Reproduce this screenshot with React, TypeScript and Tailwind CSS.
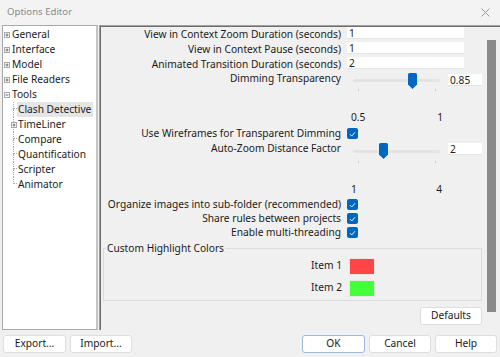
import React from "react";

function PlusBox({ minus = false }: { minus?: boolean }) {
  return (
    <svg width="6" height="6" viewBox="0 0 6 6" className="shrink-0">
      <rect x="0.5" y="0.5" width="5" height="5" fill="#fff" stroke="#a8a8a8" strokeWidth="1" />
      <line x1="1.5" y1="3" x2="4.5" y2="3" stroke="#6a6a6a" strokeWidth="1" />
      {!minus && <line x1="3" y1="1.5" x2="3" y2="4.5" stroke="#6a6a6a" strokeWidth="1" />}
    </svg>
  );
}

function Check() {
  return (
    <div className="w-[11px] h-[11px] rounded-[2px] bg-[#0067c0] flex items-center justify-center shrink-0">
      <svg width="7" height="6" viewBox="0 0 7 6">
        <path d="M1 3.2 L2.8 5 L6 1.2" fill="none" stroke="#fff" strokeWidth="0.9" />
      </svg>
    </div>
  );
}

function Thumb() {
  return (
    <svg width="9" height="16" viewBox="0 0 9 16">
      <path d="M1.5 0 H7.5 Q9 0 9 1.5 V11.5 L4.5 16 L0 11.5 V1.5 Q0 0 1.5 0 Z" fill="#0067c0" />
    </svg>
  );
}

function Btn({ children, def = false, w = "w-[62px]" }: { children: React.ReactNode; def?: boolean; w?: string }) {
  return (
    <div
      className={`${w} h-[18px] flex items-center justify-center bg-white rounded-[3px] border ${
        def ? "border-[#9fbbdc]" : "border-[#dedede]"
      } text-[10.2px] text-[#1a1a1a]`}
    >
      {children}
    </div>
  );
}

const topItems = ["General", "Interface", "Model", "File Readers"];
const children = ["Clash Detective", "TimeLiner", "Compare", "Quantification", "Scripter", "Animator"];

export default function App() {
  return (
    <div className="w-[500px] h-[357px] bg-[#f0f0f0] flex flex-col font-['Noto_Sans',sans-serif] text-[10.2px] text-[#1b1b1b] overflow-hidden whitespace-nowrap">
      {/* title bar */}
      <div className="h-[25px] flex items-center justify-between pl-[7px] pr-[10px] bg-[#f3f3f3]">
        <span className="text-[9.6px] text-[#8a8a8a]">Options Editor</span>
        <svg width="9" height="9" viewBox="0 0 9 9">
          <path d="M0.5 0.5 L8.5 8.5 M8.5 0.5 L0.5 8.5" stroke="#9a9a9a" strokeWidth="1" />
        </svg>
      </div>

      {/* main area */}
      <div className="h-[305px] flex">
        {/* tree */}
        <div className="w-[96px] ml-[2px] bg-white border-l border-t border-b border-[#a8a8a8] border-r-2 border-r-[#c4c4c4] pt-[1px]">
          {topItems.map((t) => (
            <div key={t} className="h-[15px] flex items-center">
              <div className="ml-[1px] mr-[2px]">
                <PlusBox />
              </div>
              <span className="leading-[15px]">{t}</span>
            </div>
          ))}
          <div className="h-[15px] flex items-center">
            <div className="ml-[1px] mr-[2px]">
              <PlusBox minus />
            </div>
            <span className="leading-[15px]">Tools</span>
          </div>
          {children.map((c, i) => {
            const last = i === children.length - 1;
            const sel = i === 0;
            return (
              <div key={c} className="h-[15px] flex items-stretch">
                <div className="ml-[10px] w-[4px] flex flex-col relative">
                  <div className="h-[7px] border-l border-b border-dotted border-[#a8a8a8]" />
                  <div className={`flex-1 ${last ? "" : "border-l border-dotted border-[#a8a8a8]"}`} />
                  {c === "TimeLiner" && (
                    <div className="absolute left-[-2px] top-[5px]">
                      <PlusBox />
                    </div>
                  )}
                </div>
                <span className={`leading-[15px] pl-[1px] pr-[2px] ${sel ? "bg-[#e5e5e5]" : ""}`}>{c}</span>
              </div>
            );
          })}
        </div>

        {/* right panel */}
        <div className="flex-1 ml-[1px] flex border-l border-t border-[#a0a0a0] shadow-[inset_1px_1px_0_#6e6e6e] pl-[1px] pt-[1px]">
          <div className="w-[382px] flex flex-col">
            {[
              ["View in Context Zoom Duration (seconds)", "1"],
              ["View in Context Pause (seconds)", "1"],
              ["Animated Transition Duration (seconds)", "2"],
            ].map(([l, v]) => (
              <div key={l} className="h-[15px] flex items-start">
                <div className="w-[240px] text-right leading-[15px]">{l}</div>
                <div className="ml-[6px] w-[117px] h-[12px] bg-white leading-[13px] pl-[2px] border-b border-[#e4e4e4]">{v}</div>
              </div>
            ))}

            {/* Dimming slider */}
            <div className="h-[21px] flex items-start">
              <div className="w-[240px] text-right leading-[12px]">Dimming Transparency</div>
              <div className="ml-[12px] w-[87px] h-[21px] relative">
                <div className="absolute left-0 right-0 top-[7px] h-[3px] rounded bg-[#e3e3e3]" />
                <div className="absolute left-[55px] top-[1px]">
                  <Thumb />
                </div>
                <div className="absolute left-[5px] top-[17px] w-[1px] h-[2px] bg-[#c8c8c8]" />
                <div className="absolute left-[82px] top-[17px] w-[1px] h-[2px] bg-[#c8c8c8]" />
              </div>
              <div className="ml-[8px] mt-[2px] w-[34px] h-[12px] bg-white leading-[13px] pl-[2px] border-b border-[#e4e4e4]">0.85</div>
            </div>

            <div className="h-[18px]" />
            <div className="h-[12px] flex leading-[12px]">
              <div className="ml-[250px] w-[92px] flex justify-between">
                <span>0.5</span>
                <span>1</span>
              </div>
            </div>
            <div className="h-[3px]" />

            <div className="h-[15px] flex items-start">
              <div className="w-[240px] text-right leading-[15px]">Use Wireframes for Transparent Dimming</div>
              <div className="ml-[6px] mt-[2px]">
                <Check />
              </div>
            </div>

            {/* auto zoom slider */}
            <div className="h-[23px] flex items-start">
              <div className="w-[240px] text-right leading-[14px]">Auto-Zoom Distance Factor</div>
              <div className="ml-[12px] w-[87px] h-[23px] relative">
                <div className="absolute left-0 right-0 top-[9px] h-[3px] rounded bg-[#e3e3e3]" />
                <div className="absolute left-[26px] top-[2px]">
                  <Thumb />
                </div>
                <div className="absolute left-[5px] top-[20px] w-[1px] h-[2px] bg-[#c8c8c8]" />
                <div className="absolute left-[82px] top-[20px] w-[1px] h-[2px] bg-[#c8c8c8]" />
              </div>
              <div className="ml-[8px] mt-[2px] w-[34px] h-[12px] bg-white leading-[13px] pl-[2px] border-b border-[#e4e4e4]">2</div>
            </div>

            <div className="h-[19px]" />
            <div className="h-[12px] flex leading-[12px]">
              <div className="ml-[250px] w-[91px] flex justify-between">
                <span>1</span>
                <span>4</span>
              </div>
            </div>
            <div className="h-[2px]" />

            {[
              "Organize images into sub-folder (recommended)",
              "Share rules between projects",
              "Enable multi-threading",
            ].map((l) => (
              <div key={l} className="h-[14px] flex items-start">
                <div className="w-[240px] text-right leading-[14px]">{l}</div>
                <div className="ml-[6px] mt-[2px]">
                  <Check />
                </div>
              </div>
            ))}

            <div className="h-[2px]" />
            <fieldset className="ml-[2px] mr-[1px] border border-[#dcdcdc] pl-[2px] pb-[1px]">
              <legend className="leading-[14px] px-[1px]">Custom Highlight Colors</legend>
              {[
                ["Item 1", "bg-[#ff4545]"],
                ["Item 2", "bg-[#44ff3a]"],
              ].map(([l, c]) => (
                <div key={l} className="h-[22px] flex items-center">
                  <div className="w-[236px] text-right">{l}</div>
                  <div className={`ml-[7px] w-[26px] h-[17px] ${c} border border-[#e8e8e8]`} />
                </div>
              ))}
            </fieldset>

            <div className="flex justify-end mt-[6px] mr-[1px]">
              <Btn>Defaults</Btn>
            </div>
          </div>

          {/* scrollbar */}
          <div className="flex-1 flex justify-center pt-[13px]">
            <div className="w-[9px] h-[272px] bg-[#8a8a8a]" />
          </div>
        </div>
      </div>

      {/* bottom bar */}
      <div className="flex-1 flex items-center px-[3px] gap-[4px]">
        <Btn w="w-[63px]">Export...</Btn>
        <Btn w="w-[62px]">Import...</Btn>
        <div className="flex-1" />
        <Btn def w="w-[63px]">OK</Btn>
        <Btn w="w-[62px]">Cancel</Btn>
        <Btn w="w-[62px]">Help</Btn>
      </div>
    </div>
  );
}
